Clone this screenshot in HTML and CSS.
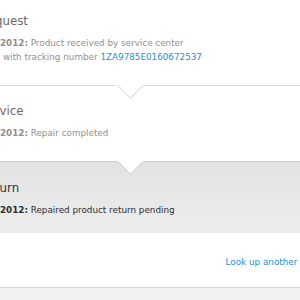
FILE: index.html
```html
<!DOCTYPE html>
<html>
<head>
<meta charset="utf-8">
<link rel="stylesheet" href="styles.css">
</head>
<body>
<div class="page">
  <section class="step">
    <h2 class="step-title">Request</h2>
    <p class="detail"><b>12/18/2012:</b> Product received by service center<br>with tracking number <a class="track" href="#">1ZA9785E0160672537</a></p>
  </section>
  <section class="step">
    <h2 class="step-title">Service</h2>
    <p class="detail"><b>12/20/2012:</b> Repair completed</p>
  </section>
  <section class="step step-current">
    <h2 class="step-title">Return</h2>
    <p class="detail"><b>12/21/2012:</b> Repaired product return pending</p>
  </section>
  <div class="actions">
    <a class="lookup" href="#">Look up another repair</a>
  </div>
  <div class="footer"></div>
</div>
</body>
</html>
```
FILE: styles.css
```css
html, body {
  margin: 0;
  padding: 0;
  overflow: hidden;
  background: #ffffff;
}
body {
  width: 300px;
  height: 300px;
  font-family: "DejaVu Sans", sans-serif;
}
.page {
  width: 360px;
  margin-left: -20px;
  margin-top: -4px;
}
.step {
  position: relative;
  padding: 15px 0 21px 0;
  border-bottom: 1px solid #dcdcdc;
  background: #ffffff;
}
.step::after {
  content: "";
  position: absolute;
  left: 141px;
  bottom: -10px;
  width: 18px;
  height: 18px;
  background: #ffffff;
  border-right: 1px solid #dcdcdc;
  border-bottom: 1px solid #dcdcdc;
  transform: rotate(45deg);
  z-index: 2;
}
.step-current::after {
  display: none;
}
.step:nth-child(2) {
  border-bottom-color: #cfcfcf;
}
.step:nth-child(2)::after {
  border-color: #cfcfcf;
}
.step-title {
  margin: 0;
  font-size: 11.8px;
  line-height: 20px;
  font-weight: normal;
  color: #6a6a6a;
}
.detail {
  margin: 5px 0 0 0;
  padding-left: 23px;
  text-indent: -34px;
  font-size: 8.8px;
  line-height: 14px;
  color: #8f8f8f;
}
.detail b {
  font-weight: bold;
  color: #8f8f8f;
}
.track {
  color: #1e8fd6;
  text-decoration: none;
}
.step-current {
  background: linear-gradient(#e2e2e2, #ededed);
  padding-top: 16px;
  padding-bottom: 15px;
  border-bottom: 1px solid #e8e8e8;
}
.step-current .step-title {
  color: #333333;
}
.step-current .detail,
.step-current .detail b {
  color: #2e2e2e;
}
.actions {
  padding: 22px 14px 18px 0;
  text-align: right;
  border-bottom: 1px solid #d6d6d6;
  font-size: 8.8px;
  line-height: 14px;
  white-space: nowrap;
}
.lookup {
  color: #1e8fd6;
  text-decoration: none;
}
.footer {
  height: 30px;
  background: #f1f1f1;
}
```
